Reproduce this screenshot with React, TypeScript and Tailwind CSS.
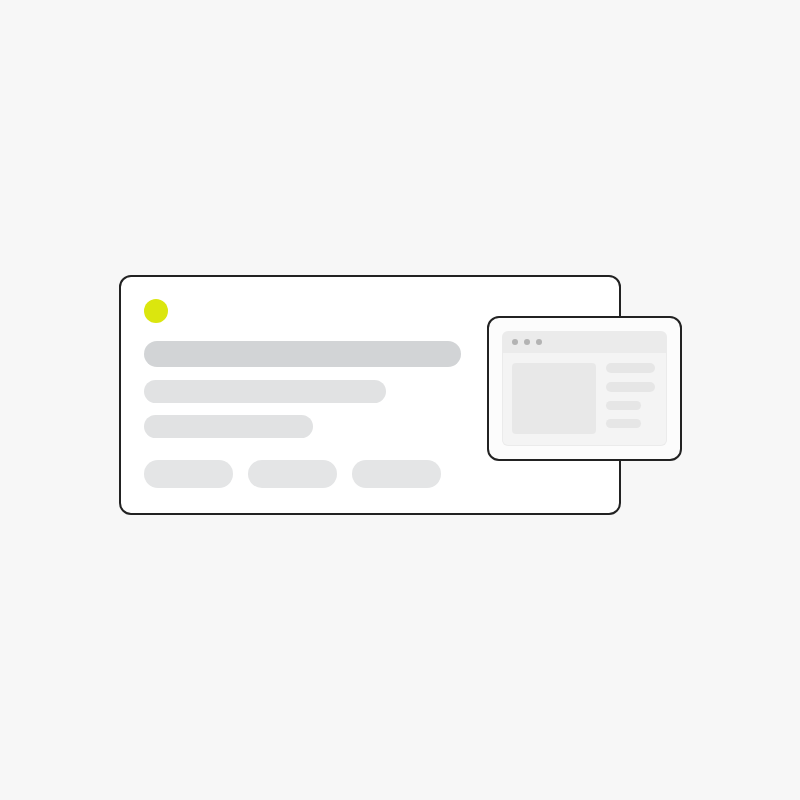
export default function App() {
  return (
    <div className="min-h-[800px] w-full bg-[#f7f7f7] pt-[275px] pl-[119px]">
      <div className="relative w-[563px]">
        {/* main card */}
        <div className="w-[502px] h-[240px] rounded-[12px] border-2 border-[#222] bg-white pl-[23px] pt-[22px]">
          <div className="size-[24px] rounded-full bg-[#dbe60e]" />
          <div className="mt-[18px] h-[26px] w-[317px] rounded-full bg-[#d2d4d6]" />
          <div className="mt-[13px] h-[23px] w-[242px] rounded-full bg-[#e1e2e3]" />
          <div className="mt-[12px] h-[23px] w-[169px] rounded-full bg-[#e1e2e3]" />
          <div className="mt-[22px] flex gap-[15px]">
            <div className="h-[28px] w-[89px] rounded-full bg-[#e4e5e6]" />
            <div className="h-[28px] w-[89px] rounded-full bg-[#e4e5e6]" />
            <div className="h-[28px] w-[89px] rounded-full bg-[#e4e5e6]" />
          </div>
        </div>

        {/* preview window */}
        <div className="absolute left-[368px] top-[41px] w-[195px] h-[145px] rounded-[12px] border-2 border-[#222] bg-[#fcfcfc] p-[13px]">
          <div className="h-full w-full rounded-[6px] bg-[#ebebeb] flex flex-col">
            <div className="h-[22px] shrink-0 flex items-center gap-[6px] pl-[10px]">
              <span className="size-[6px] rounded-full bg-[#b3b3b3]" />
              <span className="size-[6px] rounded-full bg-[#b3b3b3]" />
              <span className="size-[6px] rounded-full bg-[#b3b3b3]" />
            </div>
            <div className="mx-[1px] mb-[1px] flex-1 rounded-b-[5px] bg-[#f4f4f4] flex pl-[9px] pt-[10px] gap-[10px]">
              <div className="w-[84px] h-[71px] rounded-[4px] bg-[#e8e8e8]" />
              <div className="flex flex-col gap-[9px]">
                <div className="h-[10px] w-[49px] rounded-full bg-[#e6e6e6]" />
                <div className="h-[10px] w-[49px] rounded-full bg-[#e6e6e6]" />
                <div className="h-[9px] w-[35px] rounded-full bg-[#e6e6e6]" />
                <div className="h-[9px] w-[35px] rounded-full bg-[#e6e6e6]" />
              </div>
            </div>
          </div>
        </div>
      </div>
    </div>
  );
}
